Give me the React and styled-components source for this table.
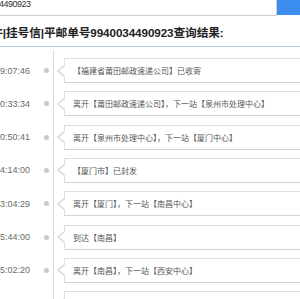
import React from "react";
import styled, { createGlobalStyle } from "styled-components";

const Global = createGlobalStyle`
  html, body {
    margin: 0;
    padding: 0;
    background: #fff;
    overflow: hidden;
    width: 300px;
    height: 299px;
  }
`;

const Page = styled.div`
  width: 300px;
  height: 299px;
  overflow: hidden;
  font-family: "Liberation Sans", "Noto Sans CJK SC", sans-serif;`

const SearchRow = styled.div`
  display: flex;
  height: 24px;
  margin-top: -8px;
  margin-left: -40px;`

const SearchInput = styled.input`
  flex: 1;
  min-width: 0;
  height: 24px;
  box-sizing: border-box;
  border: 1px solid #cfcfcf;
  border-top: none;
  outline: none;
  padding: 0 0 0 11px;
  font-family: "Liberation Sans", sans-serif;
  font-size: 9px;
  letter-spacing: -0.5px;
  color: #333;
  background: #fff;`

const SearchButton = styled.button`
  width: 23px;
  height: 23px;
  border: none;
  padding: 0;
  background: #3b8ef0;`

const Title = styled.h3`
  margin: 1px -60px 0 -43.5px;
  padding-top: 2px;
  height: 27px;
  line-height: 27px;
  white-space: nowrap;
  font-family: "Liberation Sans", "Noto Sans CJK SC", sans-serif;
  font-size: 11.7px;
  font-weight: bold;
  letter-spacing: -0.1px;
  color: #222;
  border-bottom: 1px solid #b9cde2;`

const List = styled.div`
  padding-top: 11px;
  width: 380px;
  background: linear-gradient(#dcdcdc, #dcdcdc) no-repeat 53px 3px / 1px 100%;`

const Row = styled.div`
  display: flex;
  align-items: center;
  height: 25px;
  margin-bottom: 8.33px;`

const Time = styled.div`
  width: 30px;
  flex: none;
  display: flex;
  justify-content: flex-end;
  white-space: nowrap;
  font-size: 9px;
  color: #6a6a6a;`

const Dot = styled.span`
  width: 5px;
  height: 5px;
  flex: none;
  margin-left: 13.5px;
  border-radius: 50%;
  background: #c9c9c9;`

const Card = styled.div`
  position: relative;
  flex: 1;
  height: 25px;
  box-sizing: border-box;
  margin-left: 15.5px;
  padding-left: 8px;
  display: flex;
  align-items: center;
  border: 1px solid #dedede;
  border-bottom-color: #d2d2d2;
  background: #fff;
  font-family: "Noto Sans CJK SC", sans-serif;
  font-size: 8px;
  color: #555;
  white-space: nowrap;

  &::before, &::after {
    content: "";
    position: absolute;
    top: 50%;
    border-style: solid;
    border-color: transparent;
  }
  &::before {
    left: -8px;
    margin-top: -6px;
    border-width: 6px 7px 6px 0;
    border-right-color: #d6d6d6;
  }
  &::after {
    left: -6px;
    margin-top: -5px;
    border-width: 5px 6px 5px 0;
    border-right-color: #fff;
  }`

const events = [
  ["19:07:46", "【福建省莆田邮政速递公司】已收寄"],
  ["00:33:34", "离开【莆田邮政速递公司】，下一站【泉州市处理中心】"],
  ["00:50:41", "离开【泉州市处理中心】，下一站【厦门中心】"],
  ["14:14:00", "【厦门市】已封发"],
  ["03:04:29", "离开【厦门】，下一站【南昌中心】"],
  ["15:44:00", "到达【南昌】"],
  ["15:02:20", "离开【南昌】，下一站【西安中心】"],
  ["09:21:16", "到达【西安】"],
];

export default function App() {
  return (
    <Page>
      <Global />
      <SearchRow>
        <SearchInput readOnly defaultValue="9940034490923" />
        <SearchButton />
      </SearchRow>
      <Title>国内信件|挂号信|平邮单号9940034490923查询结果:</Title>
      <List>
        {events.map(([time, text]) => (
          <Row key={time}>
            <Time>{time}</Time>
            <Dot />
            <Card>{text}</Card>
          </Row>
        ))}
      </List>
    </Page>
  );
}
